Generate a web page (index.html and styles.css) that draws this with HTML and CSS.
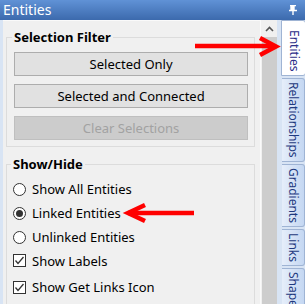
FILE: index.html
```html
<!DOCTYPE html>
<html lang="en">
    <head>
        <meta charset="UTF-8">
        <title>Entities</title>
        <link rel="stylesheet" href="styles.css">
    </head>
    <body>
        <div class="window">
            <div class="titlebar">
                <span class="title">Entities</span>
                <svg class="pin" width="8" height="10" viewBox="0 0 8 10">
                    <path d="M1 0.5H7M2 0.5V5M5 0.5V5M0 5.5H8M4 5.5V10" stroke="#fff" stroke-width="1.4" fill="none"/>
                    <rect x="2" y="1" width="3" height="4" fill="#fff"/>
                </svg>
            </div>

            <div class="main">
                <div class="content">
                    <fieldset class="group">
                        <legend>Selection Filter</legend>
                        <button class="btn">Selected Only</button>
                        <button class="btn">Selected and Connected</button>
                        <button class="btn" disabled>Clear Selections</button>
                    </fieldset>

                    <fieldset class="group showhide">
                        <legend>Show/Hide</legend>
                        <label class="opt"><span class="radio"></span>Show All Entities</label>
                        <label class="opt"><span class="radio checked"></span>Linked Entities</label>
                        <label class="opt"><span class="radio"></span>Unlinked Entities</label>
                        <label class="opt labels"><span class="check"><svg width="11" height="11" viewBox="0 0 11 11"><path d="M1.5 5.5L4 8.5L9.5 2" stroke="#333" stroke-width="1.3" fill="none"/></svg></span>Show Labels</label>
                        <label class="opt last"><span class="check"><svg width="11" height="11" viewBox="0 0 11 11"><path d="M1.5 5.5L4 8.5L9.5 2" stroke="#333" stroke-width="1.3" fill="none"/></svg></span>Show Get Links Icon</label>
                    </fieldset>
                </div>

                <div class="scrollbar">
                    <div class="scroll-up">
                        <svg width="9" height="6" viewBox="0 0 9 6"><path d="M1 5L4.5 1.5L8 5" stroke="#555" stroke-width="1.6" fill="none"/></svg>
                    </div>
                    <div class="thumb"></div>
                </div>

                <div class="tabs">
                    <div class="tab active">Entities</div>
                    <div class="tab">Relationships</div>
                    <div class="tab">Gradients</div>
                    <div class="tab">Links</div>
                    <div class="tab">Shapes</div>
                </div>
            </div>

            <!-- red callout arrows drawn over the panel -->
            <svg class="callouts" width="305" height="304" viewBox="0 0 305 304">
                <g stroke="#f00" stroke-width="4.5" fill="none" stroke-linejoin="miter">
                    <path d="M195 46H274"/>
                    <path d="M260 38L276 46.5L260 55"/>
                    <path d="M128 213H194"/>
                    <path d="M145 205L128 213L145 221"/>
                </g>
            </svg>
        </div>
    </body>
</html>
```

FILE: styles.css
```css
body {
    margin: 0;
    font-family: "Noto Sans", "Open Sans", sans-serif;
    font-size: 13px;
    color: #000;
}
.window {
    position: relative;
    width: 305px;
    height: 304px;
    overflow: hidden;
    display: flex;
    flex-direction: column;
    background-color: #d8e4f4;
}
.titlebar {
    height: 20px;
    display: flex;
    align-items: center;
    justify-content: space-between;
    padding: 0 8px 0 3px;
    background: linear-gradient(#6092d6, #3c6aad);
    color: #fff;
}
.title {
    font-size: 14px;
    line-height: 20px;
}
.main {
    flex: 1;
    display: flex;
    min-height: 0;
}
.content {
    width: 252px;
    padding: 8px 5px 0 3px;
    margin-left: 3px;
    background-color: #f0f0f0;
    border-top: 1px solid #fafafa;
    border-right: 1px solid #fafafa;
}
.group {
    margin: 0;
    padding: 7px 6px 6px 7px;
    border: 1px solid #dcdcdc;
}
.group legend {
    font-size: 13px;
    font-weight: bold;
    line-height: 16px;
    padding: 0 2px;
    margin-left: -2px;
}
.btn {
    display: block;
    width: 100%;
    height: 24px;
    margin: 0 0 8px 0;
    padding: 0;
    border: 1px solid #adadad;
    background-color: #e1e1e1;
    font-family: inherit;
    font-size: 13px;
    color: #000;
}
.btn:last-child {
    margin-bottom: 0;
}
.btn:disabled {
    background-color: #cccccc;
    border-color: #bfbfbf;
    color: #a2a2a2;
}
.showhide {
    margin-top: 9px;
    padding: 5px 6px 8px 6px;
}
.opt {
    display: flex;
    align-items: center;
    gap: 6px;
    height: 24px;
}
.opt.labels {
    height: 23px;
}
.opt.last {
    margin-top: 3px;
}
.radio {
    width: 11px;
    height: 11px;
    border: 1px solid #333;
    border-radius: 50%;
    background-color: #fff;
    display: flex;
    align-items: center;
    justify-content: center;
}
.radio.checked::after {
    content: "";
    width: 7px;
    height: 7px;
    border-radius: 50%;
    background-color: #333;
}
.check {
    width: 11px;
    height: 11px;
    border: 1px solid #333;
    background-color: #fff;
    display: flex;
}
.scrollbar {
    width: 16px;
    display: flex;
    flex-direction: column;
    background-color: #f0f0f0;
}
.scroll-up {
    height: 17px;
    display: flex;
    align-items: center;
    justify-content: center;
}
.thumb {
    flex: 1;
    margin: 0 0 0 1px;
    background-color: #cdcdcd;
}
.tabs {
    width: 24px;
    margin-left: 4px;
    display: flex;
    flex-direction: column;
    gap: 2px;
}
.tab {
    writing-mode: vertical-rl;
    margin-left: 1px;
    width: 22px;
    padding: 3px 0;
    border: 1px solid #9fb4d4;
    border-left: none;
    border-radius: 0 3px 3px 0;
    background: linear-gradient(to right, #e6eefa, #c4d7f2);
    color: #1f3a80;
    font-size: 12px;
    line-height: 22px;
    text-align: center;
}
.tab.active {
    margin-left: 0;
    width: 23px;
    padding: 9px 0 4px;
    border-left: 1px solid #9fb4d4;
    background: #fff;
    color: #2c2f8a;
}
.callouts {
    position: absolute;
    top: 0;
    left: 0;
    pointer-events: none;
}
```
